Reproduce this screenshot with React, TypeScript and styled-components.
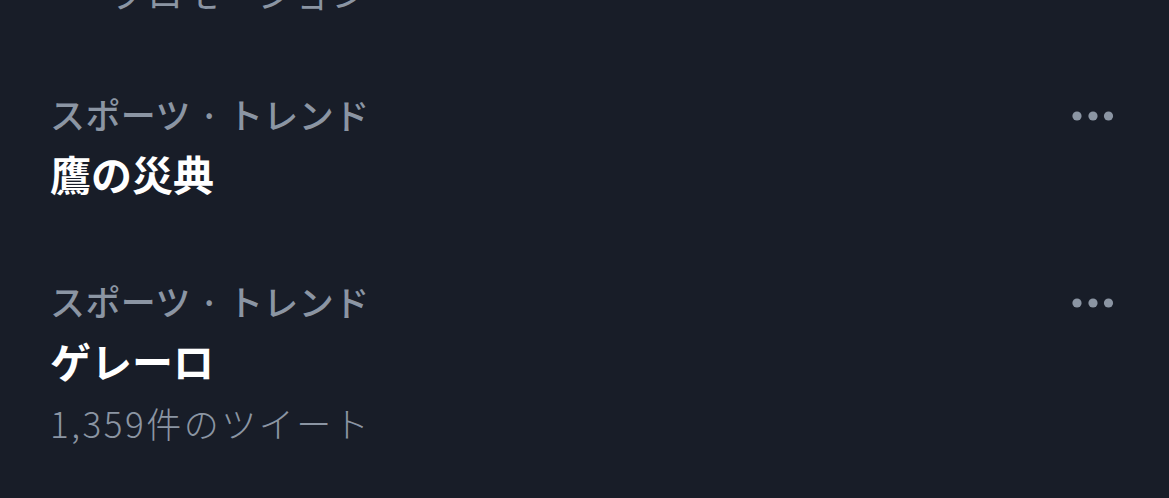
import React from 'react';
import styled, {createGlobalStyle} from 'styled-components';

const trends = [
  {category: 'スポーツ · トレンド', title: '鷹の災典', count: null},
  {category: 'スポーツ · トレンド', title: 'ゲレーロ', count: '1,359件のツイート'},
];

const GlobalStyle = createGlobalStyle`
  html, body {
    margin: 0;
    padding: 0;
    background: #181d28;
    overflow: hidden;
  }
  body {
    font-family: 'Noto Sans CJK JP', 'Noto Sans', sans-serif;
    -webkit-font-smoothing: antialiased;
  }
`;

const MoreDots = () => (
  <svg width="44" height="12" viewBox="0 0 44 12" fill="#8b95a3">
    <circle cx="6" cy="6" r="4.6" />
    <circle cx="22" cy="6" r="4.6" />
    <circle cx="37.5" cy="6" r="4.6" />
  </svg>
);

const App = () => (
  <Page>
    <GlobalStyle />
    <PromoTail>プロモーション</PromoTail>
    <List>
      {trends.map((t, i) => (
        <Trend key={i}>
          <Texts>
            <Category>{t.category}</Category>
            <Title>{t.title}</Title>
            {t.count && <Count>{t.count}</Count>}
          </Texts>
          <MoreButton>
            <MoreDots />
          </MoreButton>
        </Trend>
      ))}
    </List>
  </Page>
);

const Page = styled.div`
  width: 1169px;
  height: 498px;
  overflow: hidden;
  background: #181d28;
`;

const PromoTail = styled.div`
  margin-top: -30px;
  padding-left: 110px;
  font-size: 36px;
  line-height: 44px;
  color: #8b95a3;
  letter-spacing: 1px;
`;

const List = styled.div`
  display: flex;
  flex-direction: column;
  padding-top: 78px;
`;

const Trend = styled.div`
  display: flex;
  justify-content: space-between;
  align-items: flex-start;
  padding: 0 54px 81px 50px;
`;

const Texts = styled.div`
  display: flex;
  flex-direction: column;
  gap: 12px;
`;

const Category = styled.div`
  font-size: 35px;
  line-height: 44px;
  color: #8b95a3;
  font-weight: 500;
  letter-spacing: 0.4px;
`;

const Title = styled.div`
  font-size: 41px;
  line-height: 50px;
  color: #ffffff;
  font-weight: 700;
`;

const Count = styled.div`
  font-size: 35px;
  line-height: 44px;
  color: #8b95a3;
  font-weight: 300;
  letter-spacing: 2.5px;
  margin-top: 4px;
`;

const MoreButton = styled.div`
  display: flex;
  align-items: center;
  height: 44px;
  padding-top: 2px;
`;

export default App;
